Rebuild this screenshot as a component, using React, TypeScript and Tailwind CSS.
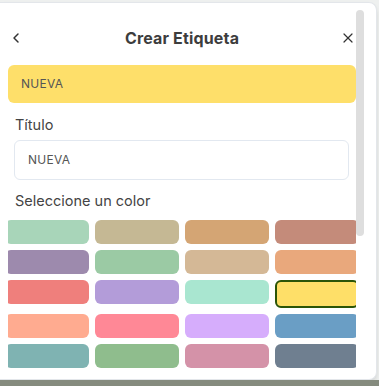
import React from "react"
import { ChevronLeft, X } from "lucide-react"

const rows: string[][] = [
  ["#a8d5b9", "#c5b894", "#d4a574", "#c48b7a"],
  ["#9d8aad", "#9bcaa4", "#d4b896", "#e9a87c"],
  ["#ef7f7c", "#b39cd9", "#a9e6d0", "#fedf68"],
  ["#ffab90", "#ff8896", "#d6adfc", "#6a9ec5"],
  ["#7fb3b2", "#8fbd8d", "#d492a8", "#6f7f90"],
]

const selected = "#fedf68"

export default function App() {
  return (
    <div
      className="w-[379px] h-[386px] flex flex-col bg-[#eef0ef] overflow-hidden"
      style={{ fontFamily: "Inter, 'Noto Sans', sans-serif" }}
    >
      <div className="flex flex-1">
        <div className="mt-[2px] w-[377px] h-[378px] bg-white border border-l-0 border-[#e3e6ea] rounded-r-lg shadow-md flex overflow-hidden">
          {/* scrollable content */}
          <div className="ml-[8px] w-[348px] overflow-hidden pt-[13px]">
            <div className="h-[44px] flex items-center justify-between">
              <ChevronLeft size={16} strokeWidth={2.2} className="text-[#333]" />
              <span className="text-[16px] font-bold text-[#3d3d3d] tracking-[0.01em]">Crear Etiqueta</span>
              <X size={16} strokeWidth={1.8} className="text-[#333]" />
            </div>
            <div className="mt-[5px] h-[38px] rounded-md bg-[#fedf6a] flex items-center pl-[13px] text-[12px] tracking-wide text-[#555]">
              NUEVA
            </div>
            <div className="mt-[12px] h-[20px] pl-[7px] text-[14.5px] leading-[20px] text-[#444]">Título</div>
            <div className="mt-[5px] ml-[6px] mr-[7px] h-[40px] rounded-md border border-[#e2e8f0] flex items-center pl-[13px] text-[12px] tracking-wide text-[#555]">
              NUEVA
            </div>
            <div className="mt-[11px] h-[20px] pl-[7px] text-[14.5px] leading-[20px] text-[#444]">
              Seleccione un color
            </div>
            <div className="mt-[9px] ml-[-3px] w-[354px] flex flex-col gap-[6px]">
              {rows.map((row, i) => (
                <div key={i} className="flex items-start gap-[6px]">
                  {row.map((c) => (
                    <div
                      key={c}
                      className={
                        c === selected
                          ? "w-[84px] h-[28px] rounded-md border-2 border-[#2b5508] shrink-0"
                          : "w-[84px] h-[24px] rounded-md shrink-0"
                      }
                      style={{ backgroundColor: c }}
                    />
                  ))}
                </div>
              ))}
            </div>
          </div>
          {/* scrollbar */}
          <div className="w-[8px] pt-[7px]">
            <div className="h-[226px] rounded-full bg-[#dedede]" />
          </div>
        </div>
        <div className="flex-1" />
      </div>
      <div className="h-[6px] bg-[#858b7e]" />
    </div>
  )
}
